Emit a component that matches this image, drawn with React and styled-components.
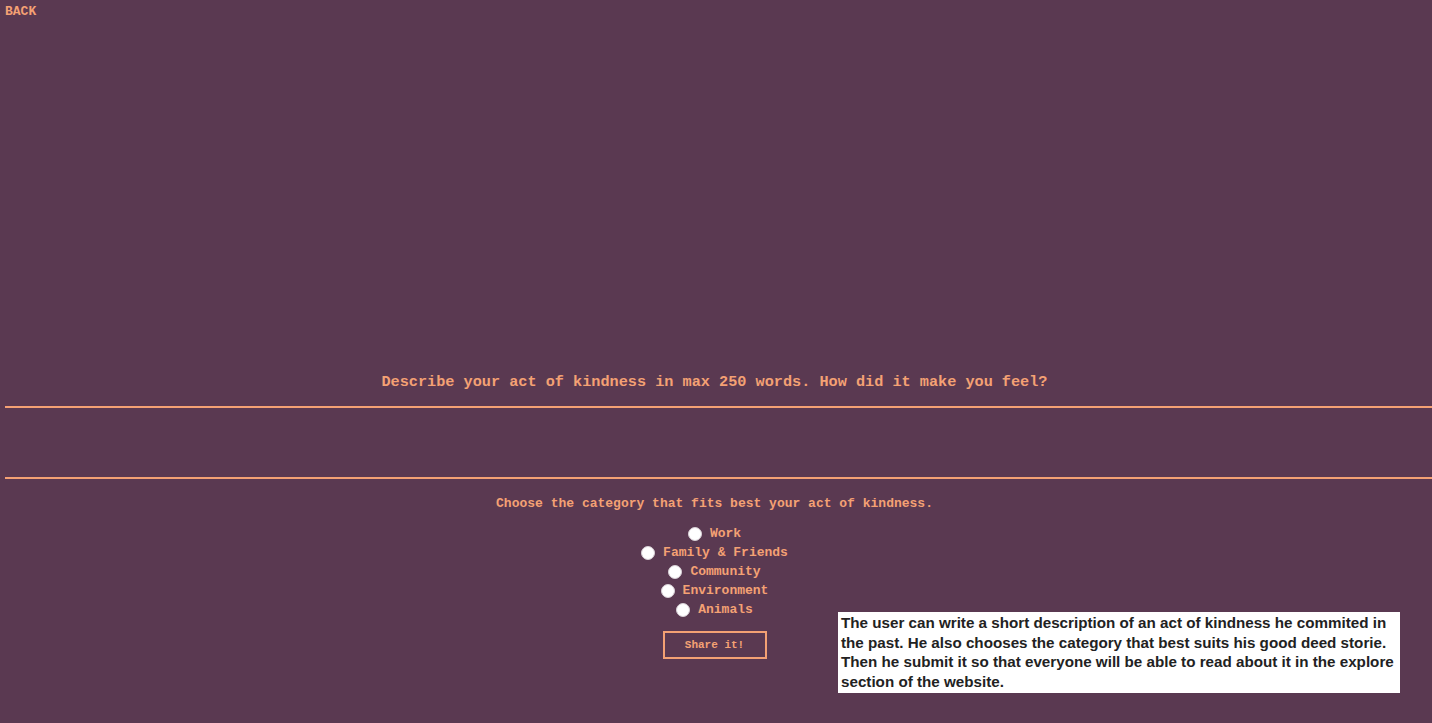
import React from "react";
import styled, { createGlobalStyle } from "styled-components";

const Global = createGlobalStyle`
  html, body { margin: 0; padding: 0; background: #5a3951; }
  body { font-family: "Liberation Mono", "Courier New", monospace; font-size: 13px; color: #f4a174; }
  * { box-sizing: border-box; }
`;

const Page = styled.div`
  position: relative;
  min-height: 723px;
  display: flex;
  flex-direction: column;
`;

const BackLink = styled.a`
  align-self: flex-start;
  margin: 4px 0 0 5px;
  font-weight: bold;
  font-size: 13px;
  line-height: 15px;
  color: #f4a174;
  text-decoration: none;
`;

const Form = styled.form`
  display: flex;
  flex-direction: column;
  align-items: center;
  padding-right: 3px;
`;

const Question = styled.h3`
  margin: 354px 0 0 0;
  font-size: 15.21px;
  line-height: 18px;
  font-weight: bold;
`;

const Story = styled.textarea`
  align-self: stretch;
  margin: 15px -3px 0 5px;
  height: 73px;
  background: transparent;
  border: none;
  border-top: 2px solid #f4a174;
  border-bottom: 2px solid #f4a174;
  resize: none;
  outline: none;
  color: #f4a174;
  font-family: inherit;
`;

const Prompt = styled.p`
  margin: 17px 0 0 0;
  font-weight: bold;
  font-size: 13px;
  line-height: 15px;
`;

const Options = styled.div`
  margin-top: 13px;
  display: flex;
  flex-direction: column;
  align-items: center;
`;

const Option = styled.label`
  display: flex;
  align-items: center;
  gap: 8px;
  height: 19px;
  font-weight: bold;
  font-size: 13px;
`;

const Radio = styled.input`
  appearance: none;
  margin: 0;
  width: 14px;
  height: 14px;
  border-radius: 50%;
  background: #fff;
  border: 1px solid #d8d0d6;
`;

const Share = styled.button`
  margin-top: 12px;
  width: 104px;
  height: 28px;
  background: transparent;
  border: 2px solid #f4a174;
  color: #f4a174;
  font-family: inherit;
  font-weight: bold;
  font-size: 11px;
  cursor: pointer;
`;

const Note = styled.div`
  position: absolute;
  left: 838px;
  top: 612px;
  width: 562px;
  height: 81px;
  padding: 1px 1px 1px 3px;
  background: #fff;
  color: #222;
  font-family: "Liberation Sans", Arial, sans-serif;
  font-weight: bold;
  font-size: 15.2px;
  line-height: 19.5px;
`;

const categories = ["Work", "Family & Friends", "Community", "Environment", "Animals"];

export default function App() {
  return (
    <Page>
      <Global />
      <BackLink href="#">BACK</BackLink>
      <Form onSubmit={(e) => e.preventDefault()}>
        <Question>Describe your act of kindness in max 250 words. How did it make you feel?</Question>
        <Story />
        <Prompt>Choose the category that fits best your act of kindness.</Prompt>
        <Options>
          {categories.map((c) => (
            <Option key={c}>
              <Radio type="radio" name="category" value={c} />
              {c}
            </Option>
          ))}
        </Options>
        <Share type="submit">Share it!</Share>
      </Form>
      <Note>
        The user can write a short description of an act of kindness he commited in the past. He also chooses the category that best suits his good deed storie. Then he submit it so that everyone will be able to read about it in the explore section of the website.
      </Note>
    </Page>
  );
}
